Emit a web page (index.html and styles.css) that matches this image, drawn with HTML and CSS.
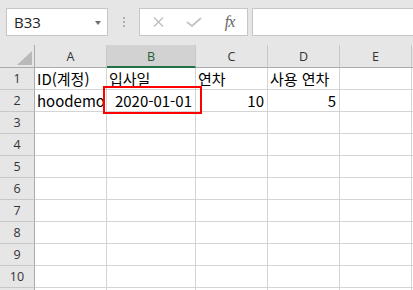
FILE: index.html
```html
<!DOCTYPE html>
<html lang="ko">
<head>
  <meta charset="UTF-8" />
  <title>Sheet</title>
  <link rel="stylesheet" href="styles.css">
</head>
<body>
  <div class="toolbar">
    <div class="name-box">
      <span>B33</span>
      <span class="caret"></span>
    </div>
    <div class="grip"><i></i><i></i><i></i></div>
    <div class="fx-buttons">
      <span class="slot">
        <svg width="11" height="10" viewBox="0 0 11 10"><path d="M1 0.5L10 9.5M10 0.5L1 9.5" stroke="#bdbdbd" stroke-width="1.3" fill="none"/></svg>
      </span>
      <span class="slot">
        <svg width="16" height="10" viewBox="0 0 16 10"><path d="M1 5L6 9L15 1" stroke="#c4c4c4" stroke-width="1.8" fill="none"/></svg>
      </span>
      <span class="slot fx">fx</span>
    </div>
    <div class="formula-input"></div>
  </div>

  <div class="sheet">
    <div class="corner"><span class="tri"></span></div>
    <div class="col-head">A</div>
    <div class="col-head active">B</div>
    <div class="col-head">C</div>
    <div class="col-head">D</div>
    <div class="col-head">E</div>
    <div class="col-head last"></div>

    <div class="row-head">1</div>
    <div class="cell">ID(계정)</div>
    <div class="cell">입사일</div>
    <div class="cell">연차</div>
    <div class="cell">사용 연차</div>
    <div class="cell"></div>
    <div class="cell"></div>

    <div class="row-head">2</div>
    <div class="cell">hoodemo</div>
    <div class="cell num">2020-01-01</div>
    <div class="cell num">10</div>
    <div class="cell num">5</div>
    <div class="cell"></div>
    <div class="cell"></div>
  </div>

  <div class="highlight"></div>

  <script>
    const sheet = document.querySelector('.sheet');
    // rows 3..10 plus the top sliver of the next row
    for (let r = 3; r <= 11; r++) {
      const head = document.createElement('div');
      head.className = 'row-head';
      head.textContent = r <= 10 ? r : '';
      sheet.appendChild(head);
      for (let c = 0; c < 6; c++) {
        const cell = document.createElement('div');
        cell.className = 'cell';
        sheet.appendChild(cell);
      }
    }
  </script>
</body>
</html>
```

FILE: styles.css
```css
body {
  margin: 0;
  background-color: #e6e6e6;
  font-family: "Noto Sans CJK KR", "Noto Sans", sans-serif;
  overflow: hidden;
  position: relative;
  width: 413px;
  height: 290px;
}

.toolbar {
  height: 45px;
  box-sizing: border-box;
  padding: 8px 0 0 6px;
  display: flex;
  align-items: flex-start;
}

.name-box {
  width: 102px;
  height: 28px;
  box-sizing: border-box;
  background-color: #fff;
  border: 1px solid #c6c6c6;
  display: flex;
  align-items: center;
  justify-content: space-between;
  padding: 0 6px 0 7px;
  font-family: "Open Sans", "Noto Sans", sans-serif;
  font-size: 15px;
  color: #222;
}

.caret {
  width: 0;
  height: 0;
  border-left: 3.5px solid transparent;
  border-right: 3.5px solid transparent;
  border-top: 4px solid #6e6e6e;
  margin-top: 1px;
}

.grip {
  width: 31px;
  height: 28px;
  display: flex;
  flex-direction: column;
  align-items: center;
  justify-content: center;
  gap: 2px;
}

.grip i {
  display: block;
  width: 2px;
  height: 2px;
  background-color: #b0b0b0;
}

.fx-buttons {
  width: 109px;
  height: 28px;
  box-sizing: border-box;
  background-color: #fff;
  border: 1px solid #c6c6c6;
  display: flex;
  align-items: center;
}

.slot {
  width: 36px;
  display: flex;
  justify-content: center;
  align-items: center;
}

.slot.fx {
  width: 35px;
  font-family: "Liberation Serif", serif;
  font-style: italic;
  font-size: 16px;
  color: #666;
  letter-spacing: -1px;
}

.formula-input {
  flex: 1;
  height: 28px;
  box-sizing: border-box;
  margin-left: 4px;
  margin-right: -2px;
  background-color: #fff;
  border: 1px solid #c6c6c6;
}

.sheet {
  display: grid;
  grid-template-columns: 35px 72px 89px 72px 72px 72px 1fr;
  grid-template-rows: 23px;
  grid-auto-rows: 22px;
  background-color: #fff;
}

.corner,
.col-head,
.row-head {
  background-color: #e6e6e6;
  box-sizing: border-box;
  font-family: "Open Sans", "Noto Sans", sans-serif;
  font-size: 12.5px;
  color: #333;
  display: flex;
  align-items: center;
  justify-content: center;
}

.corner {
  border-right: 1px solid #ababab;
  border-bottom: 1px solid #ababab;
  align-items: flex-end;
  justify-content: flex-end;
  padding: 0 2px 2px 0;
}

.tri {
  width: 15px;
  height: 14px;
  background-color: #b9b9b9;
  clip-path: polygon(100% 0, 100% 100%, 0 100%);
}

.col-head {
  border-right: 1px solid #c8c8c8;
  border-bottom: 1px solid #ababab;
  padding-top: 1px;
}

.col-head.active {
  background-color: #d2d2d2;
  border-bottom: 2px solid #217346;
  color: #1e5e3a;
}

.col-head.last {
  border-right: none;
}

.row-head {
  border-right: 1px solid #ababab;
  border-bottom: 1px solid #c8c8c8;
}

.cell {
  box-sizing: border-box;
  border-right: 1px solid #d4d4d4;
  border-bottom: 1px solid #d4d4d4;
  font-size: 15px;
  line-height: 18px;
  color: #000;
  padding: 2px 3px 0 2px;
  white-space: nowrap;
  overflow: visible;
}

.cell.num {
  text-align: right;
}

.highlight {
  position: absolute;
  left: 103px;
  top: 86px;
  width: 99px;
  height: 28px;
  box-sizing: border-box;
  border: 2px solid #ff0000;
}
```
